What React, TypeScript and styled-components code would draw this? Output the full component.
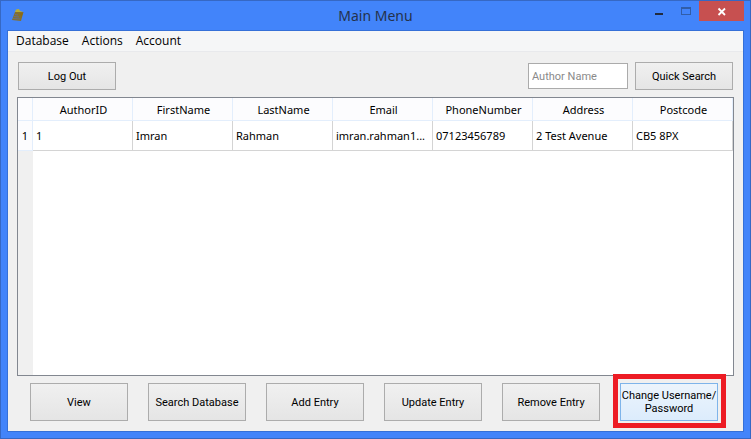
import React from "react";
import styled, { createGlobalStyle, css } from "styled-components";

const GlobalStyle = createGlobalStyle`
  *, *::before, *::after { box-sizing: border-box; }
  body { margin: 0; font-family: "Noto Sans", "Open Sans", sans-serif; color: #000; }
`;

const Window = styled.div`
  min-height: 100vh;
  display: flex;
  flex-direction: column;
  background: #4284fa;
  border: 1px solid #3668c4;
  padding: 0 6px 6px;
`;

const TitleBar = styled.header`
  height: 29px;
  display: grid;
  grid-template-columns: 1fr auto 1fr;
  align-items: start;
`;

const AppIcon = styled.svg`
  display: block;
  margin: 7px 0 0 4px;
`;

const Title = styled.h1`
  margin: 0;
  font-size: 14px;
  line-height: 30px;
  font-weight: 400;
  color: #24324c;
`;

const WindowControls = styled.div`
  display: flex;
  justify-content: flex-end;
`;

const ControlButton = styled.button<{ $close?: boolean }>`
  width: ${(p) => (p.$close ? 45 : 27)}px;
  height: 20px;
  padding: 0;
  border: 0;
  background: ${(p) => (p.$close ? "#c75050" : "transparent")};

  svg { display: block; margin: 0 auto; }
`;

const Client = styled.div`
  flex: 1;
  display: flex;
  flex-direction: column;
  border: 1px solid #3570d8;
  background: #f0f0f0;
`;

const MenuBar = styled.nav`
  height: 21px;
  display: flex;
  gap: 13px;
  padding: 0 8px;
  background: #f5f6f7;
  border-bottom: 1px solid #e8e9ec;
`;

const MenuItem = styled.button`
  padding: 0;
  border: 0;
  background: none;
  font: 12px/20px "Open Sans", "Noto Sans", sans-serif;
  color: #000;
`;

const Main = styled.main`
  flex: 1;
  display: flex;
  flex-direction: column;
  gap: 7px;
  padding: 10px 9px;
`;

const Toolbar = styled.div`
  display: flex;
  justify-content: space-between;
  padding: 0 1px;
`;

const SearchForm = styled.form`
  display: flex;
  align-items: center;
  gap: 7px;
`;

const SearchInput = styled.input`
  width: 100px;
  height: 26px;
  padding: 0 3px;
  border: 1px solid #ababab;
  background: #fff;
  font: 11px/16px Roboto, "Noto Sans", sans-serif;

  &::placeholder { color: #8a8a8a; opacity: 1; }
`;

const PushButton = styled.button<{ $tall?: boolean; $active?: boolean }>`
  position: relative;
  width: 98px;
  height: ${(p) => (p.$tall ? 38 : 28)}px;
  padding: 0;
  border: 1px solid #acacac;
  background: linear-gradient(#f0f0f0, #e5e5e5);
  font: 11px/13px Roboto, "Noto Sans", sans-serif;
  color: #000;

  ${(p) =>
    p.$active &&
    css`
      border-color: #7eb4ea;
      background: linear-gradient(#ecf4fc, #dcecfc);

      &::after {
        content: "";
        position: absolute;
        inset: -10px -9px -8px -8px;
        border: 5px solid #ed1c24;
        pointer-events: none;
      }
    `}
`;

const TableFrame = styled.div`
  flex: 1;
  border: 1px solid #828790;
  background: linear-gradient(to right, #f0f0f0 15px, #fff 15px);
`;

const Table = styled.table`
  width: 100%;
  table-layout: fixed;
  border-collapse: separate;
  border-spacing: 0;
  font-size: 11px;
  line-height: 16px;
`;

const HeadCell = styled.th<{ $index?: boolean }>`
  width: ${(p) => (p.$index ? "15px" : "auto")};
  height: 23px;
  padding: 2px 0 0 2px;
  border-right: 1px solid #e3eefc;
  border-bottom: 1px solid #e3eefc;
  background: #fcfcfe;
  font-weight: 400;
  text-align: center;
`;

const RowHead = styled.th`
  height: 30px;
  padding: 0;
  border-right: 1px solid #e3eefc;
  border-bottom: 1px solid #e3eefc;
  background: #fcfcfe;
  font-weight: 400;
`;

const Cell = styled.td`
  height: 30px;
  padding: 0 3px;
  border-right: 1px solid #d4d4d4;
  border-bottom: 1px solid #d4d4d4;
  background: #fff;
  overflow: hidden;
  text-overflow: ellipsis;
  white-space: nowrap;
`;

const Actions = styled.div`
  display: flex;
  justify-content: space-between;
  padding: 0 16px 0 13px;
`;

const columns = ["AuthorID", "FirstName", "LastName", "Email", "PhoneNumber", "Address", "Postcode"];
const rows = [["1", "Imran", "Rahman", "imran.rahman1...", "07123456789", "2 Test Avenue", "CB5 8PX"]];
const actions = ["View", "Search Database", "Add Entry", "Update Entry", "Remove Entry"];

export default function App() {
  return (
    <>
      <GlobalStyle />
      <Window>
        <TitleBar>
          <AppIcon width="14" height="15" viewBox="0 0 14 15" aria-hidden="true">
            <path d="M4 4 L12.5 4 L10 13 L1 12 Z" fill="#85702e" />
            <path d="M5 1.5 L8 1 L9 3 L12 4 L4 4 Z" fill="#b9ae35" />
            <path d="M4 6.5 L7 7 M3 8.5 L8 9 M2 10.5 L9 11" stroke="#5f719c" strokeWidth="0.8" />
            <path d="M9 5 L12 5 L10 10 Z" fill="#8d6b13" />
          </AppIcon>
          <Title>Main Menu</Title>
          <WindowControls>
            <ControlButton aria-label="Minimize">
              <svg width="27" height="20" shapeRendering="crispEdges">
                <rect x="10" y="12" width="8" height="2" fill="#222b3d" />
              </svg>
            </ControlButton>
            <ControlButton aria-label="Maximize">
              <svg width="27" height="20" shapeRendering="crispEdges">
                <path d="M9 6h10v8H9z M10 8v5h8V8z" fill="#315da8" fillRule="evenodd" />
              </svg>
            </ControlButton>
            <ControlButton $close aria-label="Close">
              <svg width="45" height="20">
                <path d="M19.5 7.5 L26 14 M26 7.5 L19.5 14" stroke="#fff" strokeWidth="1.8" />
              </svg>
            </ControlButton>
          </WindowControls>
        </TitleBar>
        <Client>
          <MenuBar>
            <MenuItem>Database</MenuItem>
            <MenuItem>Actions</MenuItem>
            <MenuItem>Account</MenuItem>
          </MenuBar>
          <Main>
            <Toolbar>
              <PushButton>Log Out</PushButton>
              <SearchForm onSubmit={(e) => e.preventDefault()}>
                <SearchInput aria-label="Author Name" placeholder="Author Name" />
                <PushButton type="submit">Quick Search</PushButton>
              </SearchForm>
            </Toolbar>
            <TableFrame>
              <Table>
                <thead>
                  <tr>
                    <HeadCell $index />
                    {columns.map((c) => (
                      <HeadCell key={c} scope="col">{c}</HeadCell>
                    ))}
                  </tr>
                </thead>
                <tbody>
                  {rows.map((row, i) => (
                    <tr key={row[0]}>
                      <RowHead scope="row">{i + 1}</RowHead>
                      {row.map((value, j) => (
                        <Cell key={columns[j]}>{value}</Cell>
                      ))}
                    </tr>
                  ))}
                </tbody>
              </Table>
            </TableFrame>
            <Actions>
              {actions.map((a) => (
                <PushButton key={a} $tall>{a}</PushButton>
              ))}
              <PushButton $tall $active>Change Username/ Password</PushButton>
            </Actions>
          </Main>
        </Client>
      </Window>
    </>
  );
}
